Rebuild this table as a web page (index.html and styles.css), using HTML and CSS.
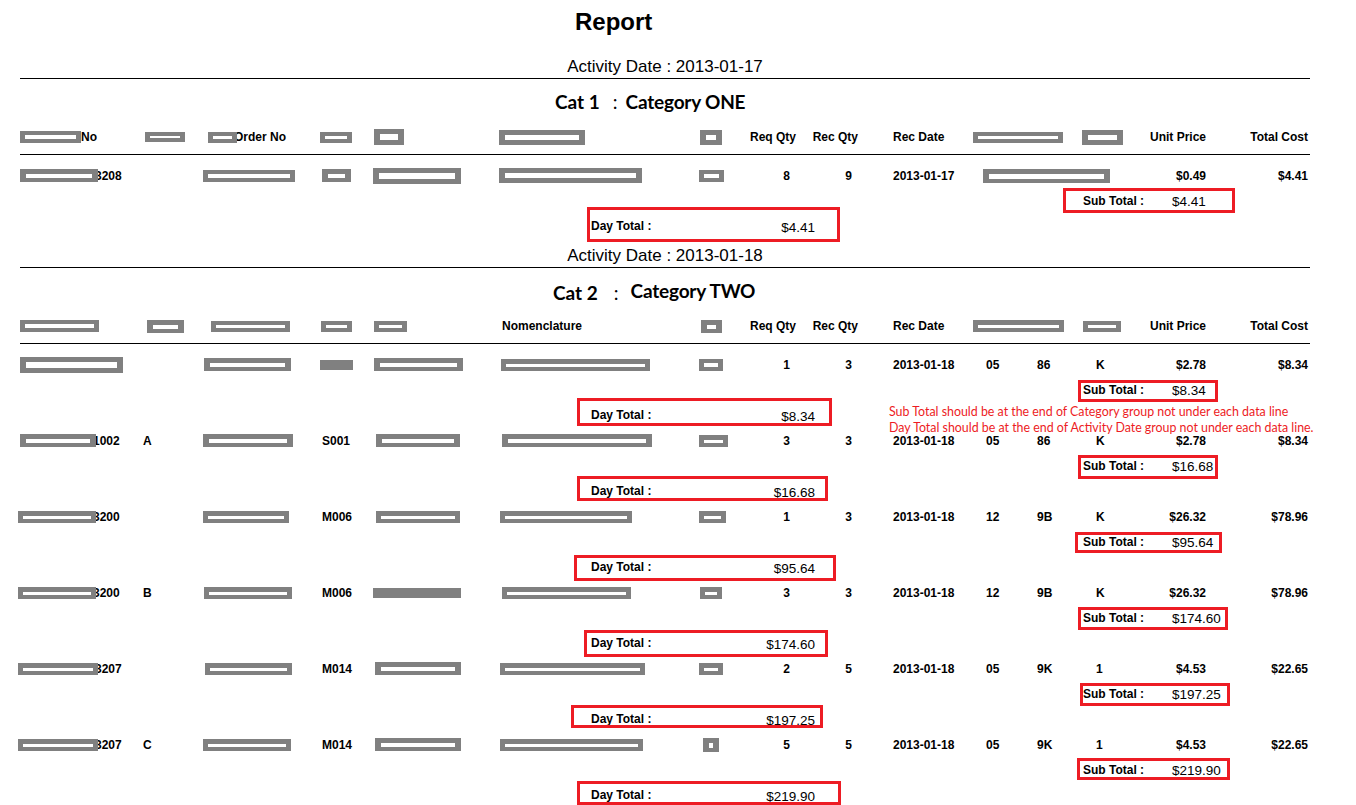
FILE: index.html
```html
<!DOCTYPE html>
<html>
<head>
<meta charset="utf-8">
<title>Report</title>
<link rel="stylesheet" href="styles.css">
</head>
<body>
<div class="page">
  <div class="title">Report</div>

  <div class="act">Activity Date : 2013-01-17</div>
  <div class="cat"><span class="cat-no">Cat 1</span><span class="cat-sep">:</span><span class="cat-name">Category ONE</span></div>

  <div class="grid thead">
    <span><span class="rd w61"></span>No</span>
    <span><span class="rd w40 h10 ml2"></span></span>
    <span><span class="rd w29 h11 ml5 ov"></span>Order No</span>
    <span><span class="rd w32 h11"></span></span>
    <span><span class="rd w30 h16 ml1"></span></span>
    <span><span class="rd w86 h15"></span></span>
    <span><span class="rd w22 h15 ml1"></span></span>
    <span class="r">Req Qty</span>
    <span class="r">Rec Qty</span>
    <span class="dt">Rec Date</span>
    <span class="sp2"><span class="rd w90 h11"></span></span>
    <span><span class="rd w41 h15"></span></span>
    <span class="r">Unit Price</span>
    <span class="r">Total Cost</span>
  </div>

  <div class="rec first k0">
    <div class="grid row">
      <span><span class="rd w78 h13 ov"></span>3208</span>
      <span></span>
      <span><span class="rd w92"></span></span>
      <span><span class="rd w29 h13 ml2"></span></span>
      <span><span class="rd w88 h16"></span></span>
      <span><span class="rd w143 h15"></span></span>
      <span><span class="rd w25"></span></span>
      <span class="q">8</span>
      <span class="q">9</span>
      <span class="dt">2013-01-17</span>
      <span class="sp2"><span class="rd w127 h14 ml10"></span></span>
      <span></span>
      <span class="r">$0.49</span>
      <span class="r">$4.41</span>
    </div>
    <div class="sub"><span class="lbl">Sub Total :</span><span class="val">$4.41</span></div>
    <div class="day"><span class="lbl">Day Total :</span><span class="val">$4.41</span></div>
  </div>

  <div class="act act2">Activity Date : 2013-01-18</div>
  <div class="cat cat2"><span class="cat-no">Cat 2</span><span class="cat-sep">:</span><span class="cat-name">Category TWO</span></div>

  <div class="grid thead">
    <span><span class="rd w79"></span></span>
    <span><span class="rd w37 h13 ml4"></span></span>
    <span><span class="rd w79 h11 ml8"></span></span>
    <span><span class="rd w31 h11 ml1"></span></span>
    <span><span class="rd w33 h11 ml1"></span></span>
    <span class="nm">Nomenclature</span>
    <span><span class="rd w21 h13 ml2"></span></span>
    <span class="r">Req Qty</span>
    <span class="r">Rec Qty</span>
    <span class="dt">Rec Date</span>
    <span class="sp2"><span class="rd w91 h12"></span></span>
    <span><span class="rd w38 h11 ml1"></span></span>
    <span class="r">Unit Price</span>
    <span class="r">Total Cost</span>
  </div>

  <div class="rec first k1">
    <div class="grid row">
      <span><span class="rd w103 h16"></span></span>
      <span></span>
      <span><span class="rd w87 h13 ml1"></span></span>
      <span><span class="rd w33 h10 s"></span></span>
      <span><span class="rd w89 h13 ml1"></span></span>
      <span><span class="rd w149 h12 ml2"></span></span>
      <span><span class="rd w24"></span></span>
      <span class="q">1</span>
      <span class="q">3</span>
      <span class="dt">2013-01-18</span>
      <span class="a">05</span>
      <span class="b">86</span>
      <span class="kk">K</span>
      <span class="r">$2.78</span>
      <span class="r">$8.34</span>
    </div>
    <div class="sub"><span class="lbl">Sub Total :</span><span class="val">$8.34</span></div>
    <div class="day"><span class="lbl">Day Total :</span><span class="val">$8.34</span></div>
    <div class="note">Sub Total should be at the end of Category group not under each data line<br>Day Total should be at the end of Activity Date group not under each data line.</div>
  </div>

  <div class="rec k2">
    <div class="grid row">
      <span><span class="rd w76 h13 ov"></span>1002</span>
      <span>A</span>
      <span><span class="rd w90 h13"></span></span>
      <span class="cd">S001</span>
      <span><span class="rd w84 h13 ml3"></span></span>
      <span><span class="rd w150 h13 ml3"></span></span>
      <span><span class="rd w29 h12"></span></span>
      <span class="q">3</span>
      <span class="q">3</span>
      <span class="dt">2013-01-18</span>
      <span class="a">05</span>
      <span class="b">86</span>
      <span class="kk">K</span>
      <span class="r">$2.78</span>
      <span class="r">$8.34</span>
    </div>
    <div class="sub"><span class="lbl">Sub Total :</span><span class="val">$16.68</span></div>
    <div class="day"><span class="lbl">Day Total :</span><span class="val">$16.68</span></div>
  </div>

  <div class="rec k3">
    <div class="grid row">
      <span><span class="rd w78 h12 ov ml-2"></span>3200</span>
      <span></span>
      <span><span class="rd w86 h12"></span></span>
      <span class="cd">M006</span>
      <span><span class="rd w84 h12 ml3"></span></span>
      <span><span class="rd w132 h12 ml1"></span></span>
      <span><span class="rd w27 h12"></span></span>
      <span class="q">1</span>
      <span class="q">3</span>
      <span class="dt">2013-01-18</span>
      <span class="a">12</span>
      <span class="b">9B</span>
      <span class="kk">K</span>
      <span class="r">$26.32</span>
      <span class="r">$78.96</span>
    </div>
    <div class="sub"><span class="lbl">Sub Total :</span><span class="val">$95.64</span></div>
    <div class="day"><span class="lbl">Day Total :</span><span class="val">$95.64</span></div>
  </div>

  <div class="rec k4">
    <div class="grid row">
      <span><span class="rd w78 h12 ov ml-2"></span>3200</span>
      <span>B</span>
      <span><span class="rd w88 h12 ml1"></span></span>
      <span class="cd">M006</span>
      <span><span class="rd w88 h10 s"></span></span>
      <span><span class="rd w129 h12 ml3"></span></span>
      <span><span class="rd w22 h12 ml1"></span></span>
      <span class="q">3</span>
      <span class="q">3</span>
      <span class="dt">2013-01-18</span>
      <span class="a">12</span>
      <span class="b">9B</span>
      <span class="kk">K</span>
      <span class="r">$26.32</span>
      <span class="r">$78.96</span>
    </div>
    <div class="sub"><span class="lbl">Sub Total :</span><span class="val">$174.60</span></div>
    <div class="day"><span class="lbl">Day Total :</span><span class="val">$174.60</span></div>
  </div>

  <div class="rec k5">
    <div class="grid row">
      <span><span class="rd w80 h12 ov ml-2"></span>3207</span>
      <span></span>
      <span><span class="rd w87 h12 ml2"></span></span>
      <span class="cd">M014</span>
      <span><span class="rd w86 h13 ml2"></span></span>
      <span><span class="rd w145 h12 ml1"></span></span>
      <span><span class="rd w24 h12"></span></span>
      <span class="q">2</span>
      <span class="q">5</span>
      <span class="dt">2013-01-18</span>
      <span class="a">05</span>
      <span class="b">9K</span>
      <span class="kk">1</span>
      <span class="r">$4.53</span>
      <span class="r">$22.65</span>
    </div>
    <div class="sub"><span class="lbl">Sub Total :</span><span class="val">$197.25</span></div>
    <div class="day"><span class="lbl">Day Total :</span><span class="val">$197.25</span></div>
  </div>

  <div class="rec k6">
    <div class="grid row">
      <span><span class="rd w80 h12 ov ml-2"></span>3207</span>
      <span>C</span>
      <span><span class="rd w88 h12"></span></span>
      <span class="cd">M014</span>
      <span><span class="rd w86 h13 ml2"></span></span>
      <span><span class="rd w143 h12 ml1"></span></span>
      <span><span class="rd w16 h14 ml4"></span></span>
      <span class="q">5</span>
      <span class="q">5</span>
      <span class="dt">2013-01-18</span>
      <span class="a">05</span>
      <span class="b">9K</span>
      <span class="kk">1</span>
      <span class="r">$4.53</span>
      <span class="r">$22.65</span>
    </div>
    <div class="sub"><span class="lbl">Sub Total :</span><span class="val">$219.90</span></div>
    <div class="day"><span class="lbl">Day Total :</span><span class="val">$219.90</span></div>
  </div>
</div>
</body>
</html>
```

FILE: styles.css
```css
html, body {
  margin: 0;
  padding: 0;
  background: #fff;
}

body {
  font-family: "Liberation Sans", Arial, sans-serif;
  color: #000;
  overflow: hidden;
}

.page {
  width: 1290px;
  padding-left: 20px;
}

.title {
  height: 44px;
  line-height: 44px;
  padding-left: 555px;
  font-size: 24px;
  font-weight: bold;
}

.act {
  margin-top: 12px;
  height: 22px;
  line-height: 21px;
  text-align: center;
  font-size: 17px;
  border-bottom: 1px solid #000;
}

.act2 {
  margin-top: 6px;
}

.cat {
  height: 46px;
  line-height: 46px;
  padding-left: 535px;
  font-family: Lato, "Open Sans", sans-serif;
  font-weight: bold;
  font-size: 19px;
  white-space: nowrap;
}

.cat-sep {
  font-weight: normal;
  margin-left: 13px;
  margin-right: 8px;
}

.cat-name {
  letter-spacing: -0.2px;
}

.cat2 {
  line-height: 50px;
  padding-left: 533px;
}

.cat2 .cat-sep {
  margin-left: 16px;
  margin-right: 12px;
}

.cat2 .cat-name {
  position: relative;
  top: -2px;
}

/* table grid */
.grid {
  display: grid;
  grid-template-columns: 123px 60px 117px 53px 126px 200px 46px 51px 62px 115px 57px 52px 58px 66px 102px;
  align-items: center;
  font-size: 12px;
  font-weight: bold;
}

.grid > span {
  display: flex;
  align-items: center;
  white-space: nowrap;
}

.thead {
  height: 24px;
  padding-bottom: 5px;
  border-bottom: 1px solid #000;
}

.row {
  height: 25px;
}

.grid > .r { justify-content: flex-end; }
.grid > .q { justify-content: flex-end; padding-right: 6px; }
.grid > .dt { padding-left: 35px; }
.grid > .a { padding-left: 13px; }
.grid > .b { padding-left: 7px; }
.grid > .kk { padding-left: 14px; }
.grid > .cd { padding-left: 2px; }
.grid > .nm { padding-left: 3px; }
.grid > .sp2 { grid-column: span 2; }

/* redaction bars */
.rd {
  display: inline-block;
  box-sizing: border-box;
  height: 12px;
  border-style: solid;
  border-color: #808080;
  border-width: 4px 5px;
  background: #fff;
  flex: none;
}

.rd.h10 { height: 10px; }
.rd.h11 { height: 11px; }
.rd.h12 { height: 12px; border-width: 5px 5px 4px; }
.rd.h13 { height: 13px; border-width: 5px 6px 4px; }
.rd.h14 { height: 14px; border-width: 5px 6px 4px; }
.rd.h15 { height: 15px; border-width: 5px 6px; }
.rd.h16 { height: 16px; border-width: 5px 6px; }
.rd.s { background: #808080; }

.rd.ov {
  position: relative;
  z-index: 1;
  margin-right: -3px;
}

.ml1 { margin-left: 1px; }
.ml2 { margin-left: 2px; }
.ml3 { margin-left: 3px; }
.ml4 { margin-left: 4px; }
.ml5 { margin-left: 5px; }
.ml8 { margin-left: 8px; }
.ml10 { margin-left: 10px; }
.ml-2 { margin-left: -2px; }

.w16 { width: 16px; }
.w21 { width: 21px; }
.w22 { width: 22px; }
.w24 { width: 24px; }
.w25 { width: 25px; }
.w27 { width: 27px; }
.w29 { width: 29px; }
.w30 { width: 30px; }
.w31 { width: 31px; }
.w32 { width: 32px; }
.w33 { width: 33px; }
.w37 { width: 37px; }
.w38 { width: 38px; }
.w40 { width: 40px; }
.w41 { width: 41px; }
.w61 { width: 61px; }
.w76 { width: 76px; }
.w78 { width: 78px; }
.w79 { width: 79px; }
.w80 { width: 80px; }
.w84 { width: 84px; }
.w86 { width: 86px; }
.w87 { width: 87px; }
.w88 { width: 88px; }
.w89 { width: 89px; }
.w90 { width: 90px; }
.w91 { width: 91px; }
.w92 { width: 92px; }
.w103 { width: 103px; }
.w127 { width: 127px; }
.w129 { width: 129px; }
.w132 { width: 132px; }
.w143 { width: 143px; }
.w145 { width: 145px; }
.w149 { width: 149px; }
.w150 { width: 150px; }

/* records */
.rec {
  position: relative;
  height: 76px;
}

.rec.first {
  margin-top: 8px;
}

.sub, .day {
  position: relative;
  display: flex;
  align-items: center;
  white-space: nowrap;
}

.sub {
  height: 25px;
  margin-left: 1063px;
  width: 150px;
}

.day {
  height: 26px;
  margin-left: 571px;
  width: 224px;
  justify-content: space-between;
}

.sub .lbl, .day .lbl {
  font-size: 12px;
  font-weight: bold;
}

.sub .lbl {
  width: 89px;
}

.sub .val, .day .val {
  font-size: 13.5px;
  padding-top: 2px;
}

.sub::before, .day::before {
  content: "";
  position: absolute;
  box-sizing: border-box;
  border: 3px solid #ed1c24;
}

.k0 .sub::before { left: -20px; top: 0; width: 172px; height: 25px; }
.k1 .sub::before { left: -5px; top: 3px; width: 140px; height: 22px; }
.k2 .sub::before { left: -5px; top: 2px; width: 140px; height: 24px; }
.k3 .sub::before { left: -8px; top: 3px; width: 147px; height: 21px; }
.k4 .sub::before { left: -5px; top: 2px; width: 150px; height: 23px; }
.k5 .sub::before { left: -3px; top: 2px; width: 150px; height: 23px; }
.k6 .sub::before { left: -6px; top: 1px; width: 153px; height: 22px; }

.k0 .day::before { left: -4px; top: -6px; width: 253px; height: 35px; }
.k1 .day::before { left: -14px; top: -4px; width: 255px; height: 28px; }
.k2 .day::before { left: -14px; top: -2px; width: 251px; height: 25px; }
.k3 .day::before { left: -17px; top: 1px; width: 262px; height: 26px; }
.k4 .day::before { left: -7px; top: 0; width: 244px; height: 27px; }
.k5 .day::before { left: -20px; top: -1px; width: 252px; height: 23px; }
.k6 .day::before { left: -14px; top: -1px; width: 264px; height: 24px; }

.note {
  position: absolute;
  left: 869px;
  top: 52px;
  font-family: Lato, "Open Sans", sans-serif;
  font-size: 12.4px;
  line-height: 16px;
  color: #ed1c24;
  white-space: nowrap;
}
```
